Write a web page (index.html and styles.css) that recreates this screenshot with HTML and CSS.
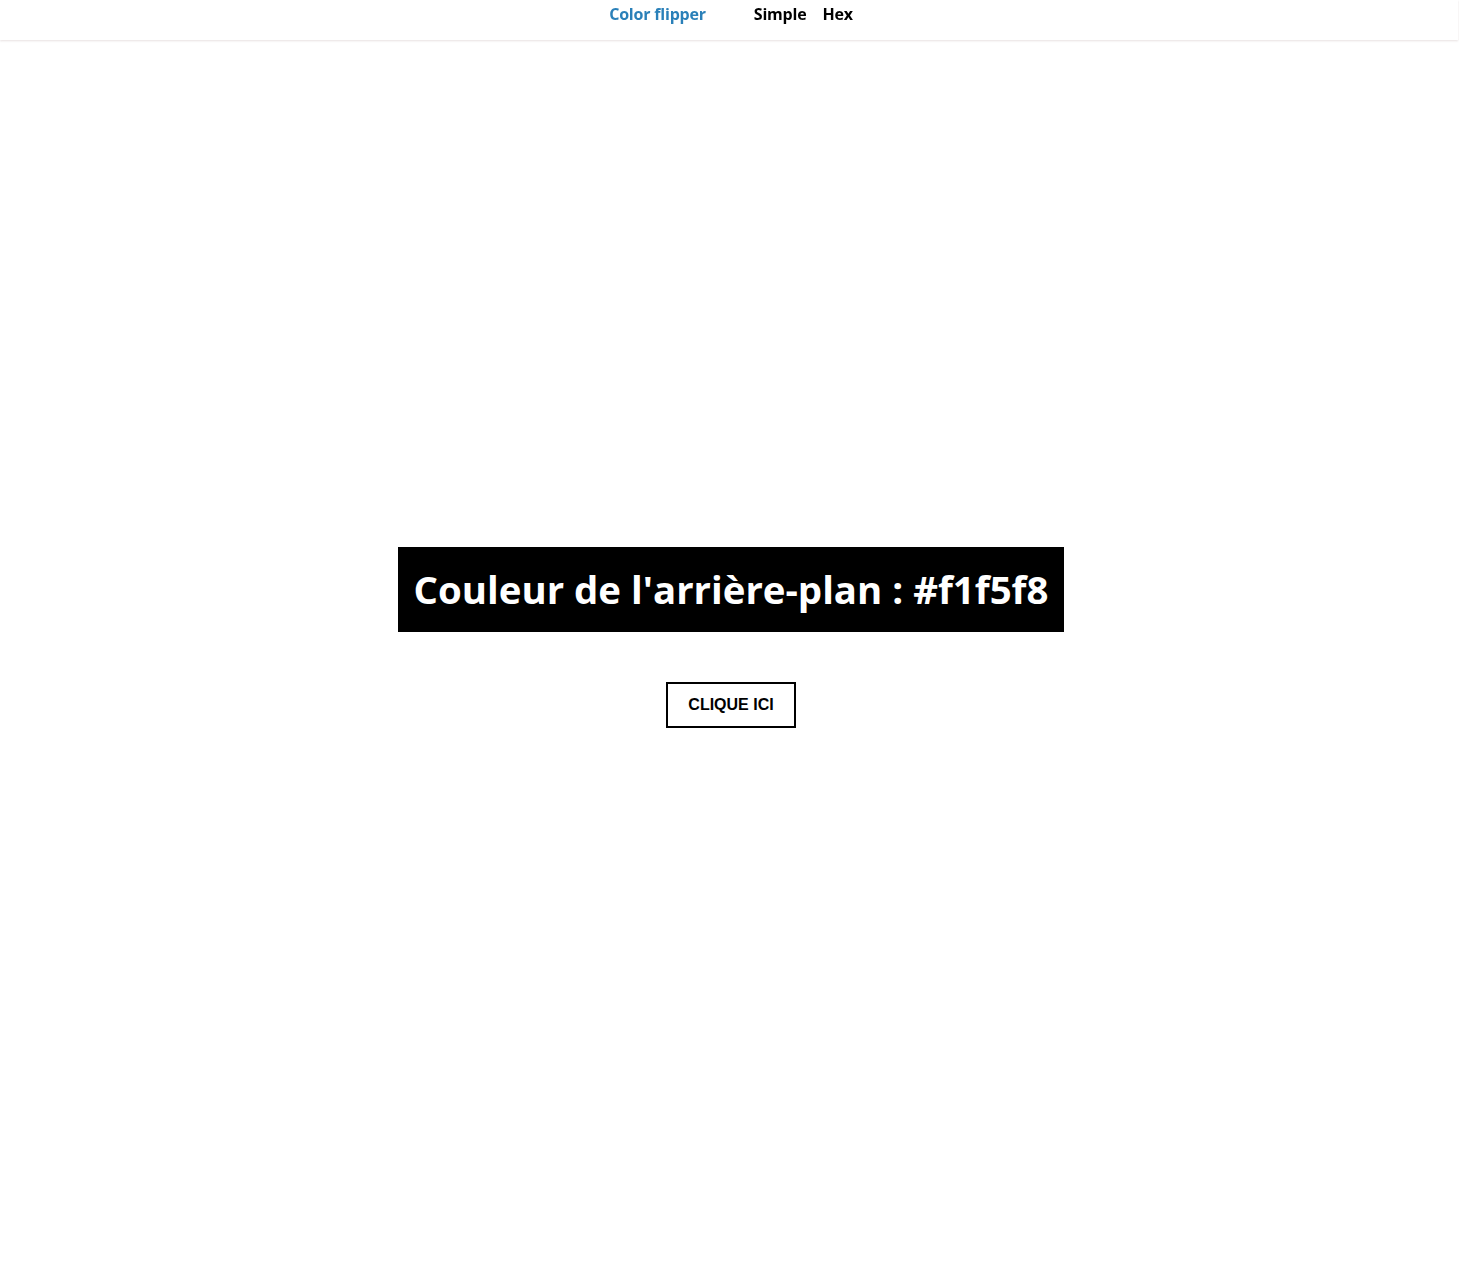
FILE: index.html
```html
<!DOCTYPE html>
<html lang="fr">
<head>
<meta charset="utf-8">
<title>Color flipper</title>
<link rel="stylesheet" href="styles.css">
</head>
<body>
<nav class="nav">
  <div class="nav-center">
    <a class="logo" href="#">Color flipper</a>
    <ul class="nav-links">
      <li><a href="#">Simple</a></li>
      <li><a href="#">Hex</a></li>
    </ul>
  </div>
</nav>
<main class="main">
  <div class="container">
    <h2 class="title">Couleur de l'arrière-plan : <span class="color">#f1f5f8</span></h2>
    <button class="btn" type="button">clique ici</button>
  </div>
</main>
</body>
</html>
```
FILE: styles.css
```css
* { box-sizing: border-box; margin: 0; padding: 0; }
body {
  font-family: "Open Sans", "Noto Sans", sans-serif;
  background: #ffffff;
  color: #000;
}
.nav {
  position: fixed;
  top: 0;
  left: 0;
  right: 1px;
  height: 40px;
  background: #fff;
  box-shadow: 0 1px 2px rgba(120, 90, 90, 0.18);
  z-index: 2;
}
.nav-center {
  display: flex;
  justify-content: center;
  align-items: center;
  gap: 48px;
  height: 28px;
  padding-left: 4px;
}
.logo {
  color: #2a80b9;
  font-weight: 700;
  font-size: 16px;
  text-decoration: none;
  letter-spacing: -0.2px;
}
.nav-links {
  list-style: none;
  display: flex;
  gap: 16px;
}
.nav-links a {
  color: #000;
  font-weight: 700;
  font-size: 16px;
  text-decoration: none;
  letter-spacing: -0.2px;
}
.main {
  height: 100vh;
  display: flex;
  align-items: center;
  justify-content: center;
  padding-top: 6px;
  padding-left: 3px;
}
.container {
  display: flex;
  flex-direction: column;
  align-items: center;
  gap: 50px;
}
.title {
  background: #000;
  color: #fff;
  font-size: 38.4px;
  font-weight: 700;
  line-height: 85px;
  height: 85px;
  padding: 0 16px;
  white-space: nowrap;
}
.btn {
  font-family: "Liberation Sans", Arial, sans-serif;
  text-transform: uppercase;
  font-weight: 700;
  font-size: 16px;
  background: transparent;
  border: 2px solid #000;
  color: #000;
  width: 130px;
  height: 46px;
}
```
